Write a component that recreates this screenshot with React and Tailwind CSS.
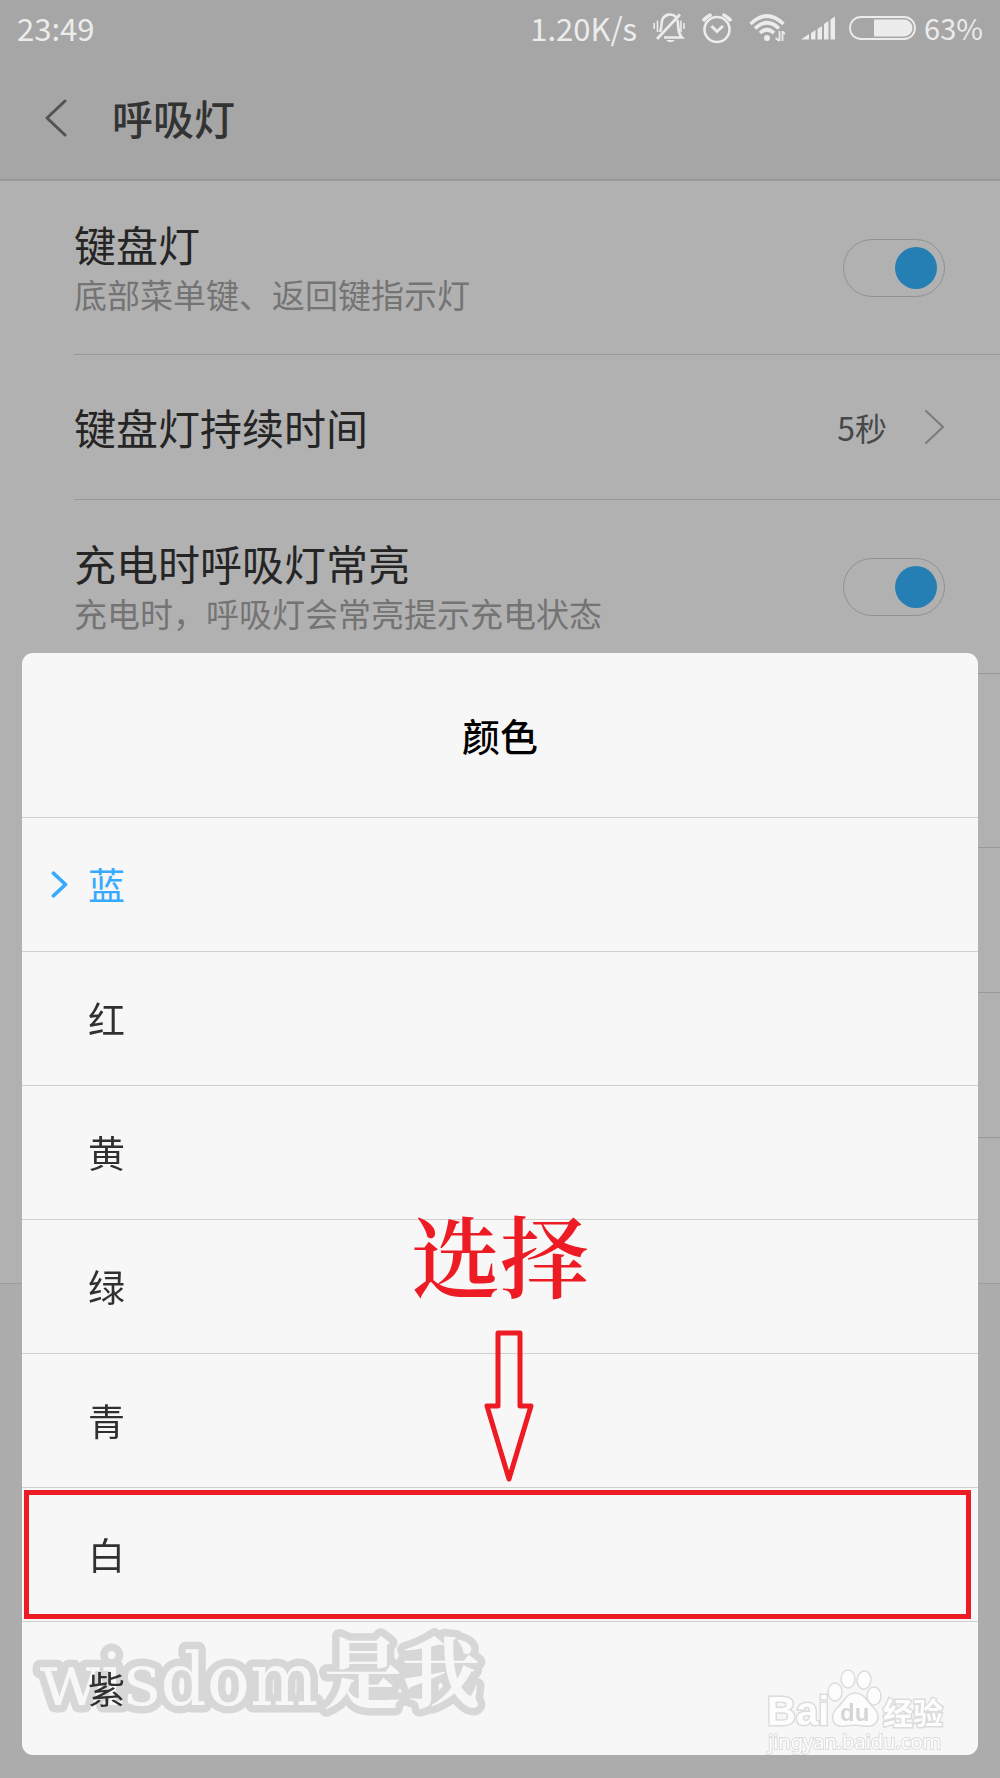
const sans = "font-['Noto_Sans_CJK_SC',sans-serif]";

const rows = [
  { label: "键盘灯", note: "底部菜单键、返回键指示灯", kind: "toggle" },
  { label: "键盘灯持续时间", value: "5秒", kind: "link" },
  { label: "充电时呼吸灯常亮", note: "充电时，呼吸灯会常亮提示充电状态", kind: "toggle" },
];

const colors = ["蓝", "红", "黄", "绿", "青", "白", "紫"];

function StatusBar() {
  return (
    <div className="flex h-[58px] items-center justify-between pb-[2px] pr-[17px] pl-[17px] text-[31px] leading-none text-[#ececec]">
      <span className="pb-[2px]">23:49</span>
      <div className="flex items-center">
        <span className="pb-[2px]">1.20K/s</span>
        <svg className="ml-4 h-8 w-8" viewBox="0 0 32 32" fill="none" stroke="currentColor" strokeWidth="2.600" aria-label="静音">
          <path d="M23 5 C19 1 12 2 9.500 7 C8 11 9 16 7 20" />
          <path d="M27 2.500 L4 27" />
          <path d="M11 25.500 H29 C25.500 22 25.500 18 25 12 C25 10 24.500 8.500 24 8" />
          <path d="M1.200 11 V17 M4.500 8.500 V20 M28 8.500 V20 M31 11 V17" strokeWidth="1.600" />
          <path d="M13 28 H22 Q17.500 32.500 13 28Z" fill="currentColor" stroke="none" />
        </svg>
        <svg className="ml-4 h-8 w-8" viewBox="0 0 32 32" fill="none" stroke="currentColor" strokeWidth="2.600" aria-label="闹钟">
          <circle cx="16" cy="17.500" r="12.500" />
          <path d="M10.500 14 L16 19.500 L22 14" strokeWidth="3" />
          <path d="M2 9 Q5 4.500 10.500 2.500 M30 9 Q27 4.500 21.500 2.500" strokeWidth="3.400" />
        </svg>
        <svg className="ml-4 h-8 w-9" viewBox="0 0 36 32" fill="none" stroke="currentColor" strokeWidth="3.600" aria-label="无线网络">
          <path d="M1.500 12 Q18 -4 34.500 12 M6 16.500 Q18 5 30 16.500 M11 21 Q18 14.500 25 21" />
          <circle cx="18" cy="26" r="3" fill="currentColor" stroke="none" />
          <path d="M30.500 19 V29 M33.500 19 V29 M26.500 26 L30.500 29 M33.500 19.500 L36 22" strokeWidth="1.800" />
        </svg>
        <svg className="ml-4 h-6 w-[34px]" viewBox="0 0 34 24" fill="currentColor" aria-label="信号">
          <path d="M0 23.500 L8 18 V23.500Z M10 17 L14.500 14 V23.500 H10Z M16.500 13 L21 10 V23.500 H16.500Z M23 8 L27.500 5 V23.500 H23Z M29.500 3.500 L34 0.500 V23.500 H29.500Z" />
        </svg>
        <svg className="ml-[14px] h-6 w-[67px]" viewBox="0 0 67 24" fill="none" stroke="currentColor" aria-label="电量">
          <rect x="1" y="1" width="65" height="22" rx="11" strokeWidth="1.800" />
          <path d="M25 3.500 H55 A8.500 8.500 0 0 1 55 20.500 H25Z" fill="currentColor" stroke="none" />
        </svg>
        <span className="ml-2 pb-[2px] text-[29px]">63%</span>
      </div>
    </div>
  );
}

function Chevron({ className, d, width }) {
  return (
    <svg className={className} viewBox="0 0 22 36" fill="none" stroke="currentColor" strokeWidth={width} strokeLinecap="round" strokeLinejoin="round" aria-hidden="true">
      <path d={d} />
    </svg>
  );
}

function SettingRow({ row, id }) {
  return (
    <div className={`ml-[74px] flex items-center justify-between border-b border-[#989898] pr-[55px] ${row.note ? "h-[174px]" : "h-[145px]"}`}>
      <div className={row.note ? "pt-[3px]" : ""}>
        <label htmlFor={id} className="block text-[42px] leading-[50px] text-[#252525]">{row.label}</label>
        {row.note && <p className="text-[33px] leading-[50px] text-[#747474]">{row.note}</p>}
      </div>
      {row.kind === "toggle" ? (
        <input
          id={id}
          type="checkbox"
          role="switch"
          defaultChecked
          className="h-[58px] w-[102px] appearance-none rounded-full border border-[#919191] p-[7px] before:block before:size-[42px] before:rounded-full before:bg-[#909090] checked:before:ml-auto checked:before:bg-[#257fb5]"
        />
      ) : (
        <button id={id} type="button" className="flex items-center gap-9 text-[32px] leading-none text-[#484848]">
          {row.value}
          <Chevron className="h-9 w-[22px] text-[#7b7b7b]" width={2} d="M3 2 L20 18 L3 34" />
        </button>
      )}
    </div>
  );
}

function AuthorMark() {
  return (
    <svg
      className="pointer-events-none absolute bottom-[20px] left-[8px] h-[120px] w-[476px]"
      viewBox="0 0 476 120"
      fill="#f7f7f7"
      stroke="#d7d7d7"
      strokeWidth="15"
      strokeLinejoin="round"
      paintOrder="stroke"
      aria-label="wisdom是我"
    >
      <text x="9" y="90" fontFamily="DejaVu Serif" fontSize="72">wisdom</text>
      <text x="294" y="87" fontFamily="Noto Serif CJK SC, Noto Sans CJK SC" fontWeight="bold" fontSize="78">是我</text>
    </svg>
  );
}

function BaiduMark() {
  return (
    <svg className="absolute right-[30px] bottom-0 h-[88px] w-[184px]" viewBox="0 0 184 88" fill="#fdfdfd" stroke="#dcdcdc" strokeWidth="1.500" aria-label="Baidu 经验 jingyan.baidu.com">
      <g paintOrder="stroke" strokeWidth="3">
        <text x="3" y="58" fontFamily="Liberation Sans" fontWeight="bold" fontSize="40">Bai</text>
        <text x="119" y="57" fontFamily="Noto Sans CJK SC" fontWeight="bold" fontSize="30">经验</text>
        <text x="4" y="82" fontFamily="Noto Sans" fontSize="20" strokeWidth="2">jingyan.baidu.com</text>
      </g>
      <ellipse cx="71" cy="25" rx="7" ry="9" />
      <ellipse cx="84" cy="12" rx="7" ry="9" />
      <ellipse cx="100" cy="13" rx="7" ry="9" transform="rotate(8 100 13)" />
      <ellipse cx="110" cy="29" rx="7" ry="9" />
      <path d="M91 26 C101 26 103 35 110 41 C118 50 113 61 101 59 C94 58 88 58 81 59 C68 61 65 49 73 41 C80 35 82 26 91 26Z" />
      <text x="76" y="54" fontFamily="Liberation Sans" fontSize="24" fontWeight="bold" fill="#d6d6d6" stroke="none">du</text>
    </svg>
  );
}

export default function App() {
  return (
    <div className={`min-h-screen bg-[#acacac] ${sans}`}>
      <header className="border-b-2 border-[#999999] bg-[#a6a6a6]">
        <StatusBar />
        <div className="flex h-[121px] items-center gap-[45px] pb-[2px] pl-[45px]">
          <button type="button" aria-label="返回" className="text-[#535353]">
            <Chevron className="h-[38px] w-[22px]" width={3} d="M20 1 L2 18 L20 35" />
          </button>
          <h1 className="text-[41px] leading-none font-medium text-[#333333]">呼吸灯</h1>
        </div>
      </header>
      <main className="border-b border-[#9c9c9c] bg-[#b1b1b1]">
        {rows.map((row, i) => <SettingRow key={row.label} row={row} id={`setting-${i}`} />)}
        <div className="ml-[74px] h-[174px] border-b border-[#989898]" />
        <div className="ml-[74px] h-[145px] border-b border-[#989898]" />
        <div className="ml-[74px] h-[145px] border-b border-[#989898]" />
        <div className="h-[145px]" />
      </main>

      <section role="dialog" aria-labelledby="sheet-title" className="fixed inset-x-[22px] bottom-[23px] rounded-[11px] bg-[#f7f7f7]">
        <h2 id="sheet-title" className="flex h-[164px] items-center justify-center text-[38px] leading-none font-medium text-black">颜色</h2>
        <AuthorMark />
        <ul>
          {colors.map((color, i) => (
            <li key={color} className="relative border-t border-[#cfcfcf]">
              <button type="button" className={`flex h-[133px] w-full items-center pl-[29px] text-[37px] leading-none ${i === 0 ? "text-[#35aaff]" : "text-[#303030]"}`}>
                <span className="w-[37px]">
                  {i === 0 && <Chevron className="h-[27px] w-[17px]" width={5} d="M3 3 L19 18 L3 33" />}
                </span>
                {color}
              </button>
              {color === "白" && <div className="pointer-events-none absolute inset-y-[2px] right-[7px] left-[2px] border-5 border-[#ed1c24]" />}
            </li>
          ))}
        </ul>
        <BaiduMark />
        <div className="pointer-events-none absolute bottom-[272px] left-[389px] w-[190px] text-[#ed1c24]">
          <p className="text-[89px] leading-none font-semibold font-['Noto_Serif_CJK_SC','Noto_Sans_CJK_SC',serif]">选择</p>
          <svg className="mt-8 ml-[73px] h-[154px] w-[50px]" viewBox="0 0 50 154" fill="none" stroke="currentColor" strokeWidth="5" strokeLinejoin="round" aria-hidden="true">
            <path d="M14 4 H36 V77 H47 L25 150 L3 77 H14Z" />
          </svg>
        </div>
      </section>
    </div>
  );
}
